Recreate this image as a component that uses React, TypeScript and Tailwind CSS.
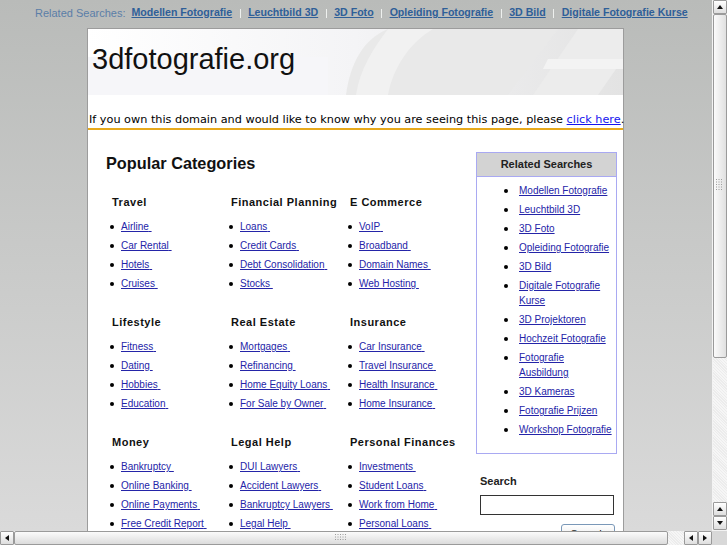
import React from "react";

const topLinks = [
  "Modellen Fotografie",
  "Leuchtbild 3D",
  "3D Foto",
  "Opleiding Fotografie",
  "3D Bild",
  "Digitale Fotografie Kurse",
];

const related = [
  "Modellen Fotografie",
  "Leuchtbild 3D",
  "3D Foto",
  "Opleiding Fotografie",
  "3D Bild",
  "Digitale Fotografie Kurse",
  "3D Projektoren",
  "Hochzeit Fotografie",
  "Fotografie Ausbildung",
  "3D Kameras",
  "Fotografie Prijzen",
  "Workshop Fotografie",
];

const categories = [
  { title: "Travel", links: ["Airline", "Car Rental", "Hotels", "Cruises"] },
  { title: "Financial Planning", links: ["Loans", "Credit Cards", "Debt Consolidation", "Stocks"] },
  { title: "E Commerce", links: ["VoIP", "Broadband", "Domain Names", "Web Hosting"] },
  { title: "Lifestyle", links: ["Fitness", "Dating", "Hobbies", "Education"] },
  { title: "Real Estate", links: ["Mortgages", "Refinancing", "Home Equity Loans", "For Sale by Owner"] },
  { title: "Insurance", links: ["Car Insurance", "Travel Insurance", "Health Insurance", "Home Insurance"] },
  { title: "Money", links: ["Bankruptcy", "Online Banking", "Online Payments", "Free Credit Report"] },
  { title: "Legal Help", links: ["DUI Lawyers", "Accident Lawyers", "Bankruptcy Lawyers", "Legal Help"] },
  { title: "Personal Finances", links: ["Investments", "Student Loans", "Work from Home", "Personal Loans"] },
];

type Dir = "up" | "down" | "left" | "right";

function Arrow({ dir }: { dir: Dir }) {
  const pts = {
    up: "0,4 3,0 6,4",
    down: "0,0 6,0 3,4",
    left: "4,0 4,6 0,3",
    right: "0,0 0,6 4,3",
  }[dir];
  const vertical = dir === "up" || dir === "down";
  return (
    <div className="w-[14px] h-[14px] shrink-0 border border-[#9a9a9a] rounded-[1px] bg-gradient-to-b from-white to-[#dedede] flex items-center justify-center">
      <svg width={vertical ? 6 : 4} height={vertical ? 4 : 6}>
        <polygon points={pts} fill="#111" />
      </svg>
    </div>
  );
}

function Grip({ vertical }: { vertical?: boolean }) {
  const cols = vertical ? 3 : 5;
  const rows = vertical ? 5 : 3;
  const dots = [];
  for (let r = 0; r < rows; r++)
    for (let c = 0; c < cols; c++)
      dots.push(<rect key={r + "-" + c} x={c * 2.5} y={r * 2.5} width="1" height="1" fill="#9c9c9c" />);
  return (
    <svg width={cols * 2.5} height={rows * 2.5}>
      {dots}
    </svg>
  );
}

function Bullet() {
  return <span className="w-[4px] h-[4px] rounded-full bg-black shrink-0" />;
}

export default function App() {
  return (
    <div className="w-[727px] h-[545px] overflow-hidden flex flex-col font-['Liberation_Sans',Arial,sans-serif]">
      <div className="flex h-[531px]">
        <div className="w-[712px] overflow-hidden bg-gradient-to-b from-[#b9bbb9] to-[#dadada]">
          {/* related searches bar */}
          <div className="h-[28px] pb-[2px] pl-[35px] flex items-center text-[11px]">
            <span className="text-[#5b7ea8] mr-[6px]">Related Searches:</span>
            {topLinks.map((l, i) => (
              <div key={l} className="flex items-center">
                {i > 0 && <span className="w-px h-[9px] bg-[#eef0ee] ml-[7.5px] mr-[7.5px] self-start mt-[4px]" />}
                <a href="#" className="font-bold text-[10.6px] text-[#2f5f98] underline">
                  {l}
                </a>
              </div>
            ))}
          </div>

          {/* white page */}
          <div className="ml-[87px] w-[537px] h-[600px] border border-b-0 border-[#9c9c9c] bg-white">
            <div className="relative h-[66px] bg-gradient-to-r from-white via-[#f4f4f6] to-[#e3e3e3] overflow-hidden">
              <svg className="absolute inset-0" width="535" height="66" viewBox="0 0 535 66">
                <rect x="0" y="28" width="240" height="38" fill="#f6f6f9" />
                <path d="M258 66 C 262 35, 275 10, 300 0 L 470 0 L 420 66 Z" fill="#e9e9e9" />
                <path d="M300 0 C 285 20, 272 40, 268 66 L 300 66 C 305 40, 320 15, 345 0 Z" fill="#f1f1f1" />
                <path d="M445 66 L 490 0 L 535 0 L 535 30 L 510 66 Z" fill="#ececec" />
                <path d="M460 30 L 535 30 L 535 40 L 455 40 Z" fill="#f3f3f3" />
              </svg>
              <h1 className="relative pl-[4px] pt-[13px] text-[29px] leading-[34px] text-[#111]">3dfotografie.org</h1>
            </div>
            <div className="mt-[17px] h-[18px] border-b-2 border-[#e7a91c] pl-[1px] leading-[16px] text-[11.25px] text-black whitespace-nowrap font-['DejaVu_Sans',Verdana,sans-serif]">
              If you own this domain and would like to know why you are seeing this page, please{" "}
              <a href="#" className="text-[#1515ee] underline">
                click here
              </a>
              .
            </div>

            <div className="flex">
              {/* categories */}
              <div className="w-[388px] pt-[23px]">
                <h2 className="pl-[18px] text-[16.3px] leading-[20px] font-bold text-[#111]">Popular Categories</h2>
                <div className="ml-[19px] mt-[22px] grid grid-cols-[119px_119px_119px] gap-y-[22px]">
                  {categories.map((c) => (
                    <div key={c.title}>
                      <h3 className="pl-[5px] text-[11px] leading-[14px] font-bold tracking-[0.5px] text-[#111] whitespace-nowrap">
                        {c.title}
                      </h3>
                      <ul className="mt-[8px]">
                        {c.links.map((l) => (
                          <li key={l} className="h-[19px] flex items-center gap-[7px] pl-[3px]">
                            <Bullet />
                            <a href="#" className="text-[10px] text-[#2424a8] underline whitespace-nowrap">
                              {l}&nbsp;
                            </a>
                          </li>
                        ))}
                      </ul>
                    </div>
                  ))}
                </div>
              </div>

              {/* sidebar */}
              <div className="mt-[22px] w-[141px]">
                <div className="border border-[#a9a9f2]">
                  <div className="h-[24px] bg-[#d3d3d3] border-b border-[#a9a9f2] flex items-center justify-center text-[11px] font-bold text-[#222]">
                    Related Searches
                  </div>
                  <ul className="pt-[6px] pb-[16px] pl-[27px] pr-[2px]">
                    {related.map((l) => (
                      <li key={l} className="flex gap-[11px] mb-[4px] last:mb-0">
                        <span className="mt-[5.5px] w-[4px] h-[4px] rounded-full bg-black shrink-0" />
                        <a href="#" className="text-[10px] leading-[15px] text-[#2424a8] underline">
                          {l}
                        </a>
                      </li>
                    ))}
                  </ul>
                </div>
                <div className="mt-[20px] pl-[4px] text-[11px] leading-[14px] font-bold text-[#222]">Search</div>
                <div className="mt-[7px] ml-[4px] w-[134px] h-[20px] border border-[#333] bg-white" />
                <div className="mt-[9px] flex justify-end pr-[2px]">
                  <button className="w-[54px] h-[20px] rounded-[3px] border border-[#7a98b8] bg-gradient-to-b from-white to-[#e4e4e4] text-[11px] text-[#222]">
                    Search
                  </button>
                </div>
              </div>
            </div>
          </div>
        </div>

        {/* vertical scrollbar */}
        <div className="w-[15px] flex flex-col bg-[#f3f3f3] pl-px">
          <Arrow dir="up" />
          <div className="h-[344px] border border-[#9a9a9a] rounded-[2px] bg-gradient-to-r from-[#fbfbfb] to-[#e0e0e0] flex items-start justify-center pt-[164px]">
            <Grip vertical />
          </div>
          <div className="flex-1 bg-[repeating-linear-gradient(45deg,#f6f6f6_0px,#f6f6f6_1px,#ececec_1px,#ececec_2px)]" />
          <Arrow dir="up" />
          <Arrow dir="down" />
          <div className="h-px" />
        </div>
      </div>

      {/* horizontal scrollbar */}
      <div className="h-[14px] flex bg-[#f3f3f3]">
        <Arrow dir="left" />
        <div className="w-[654px] h-[14px] border border-[#9a9a9a] rounded-[2px] bg-gradient-to-b from-[#fbfbfb] to-[#dcdcdc] flex items-center justify-center">
          <Grip />
        </div>
        <div className="w-[16px] bg-[repeating-linear-gradient(45deg,#f6f6f6_0px,#f6f6f6_1px,#ececec_1px,#ececec_2px)]" />
        <Arrow dir="left" />
        <Arrow dir="right" />
        <div className="w-[15px] bg-[#d8d8d8]" />
      </div>
    </div>
  );
}
